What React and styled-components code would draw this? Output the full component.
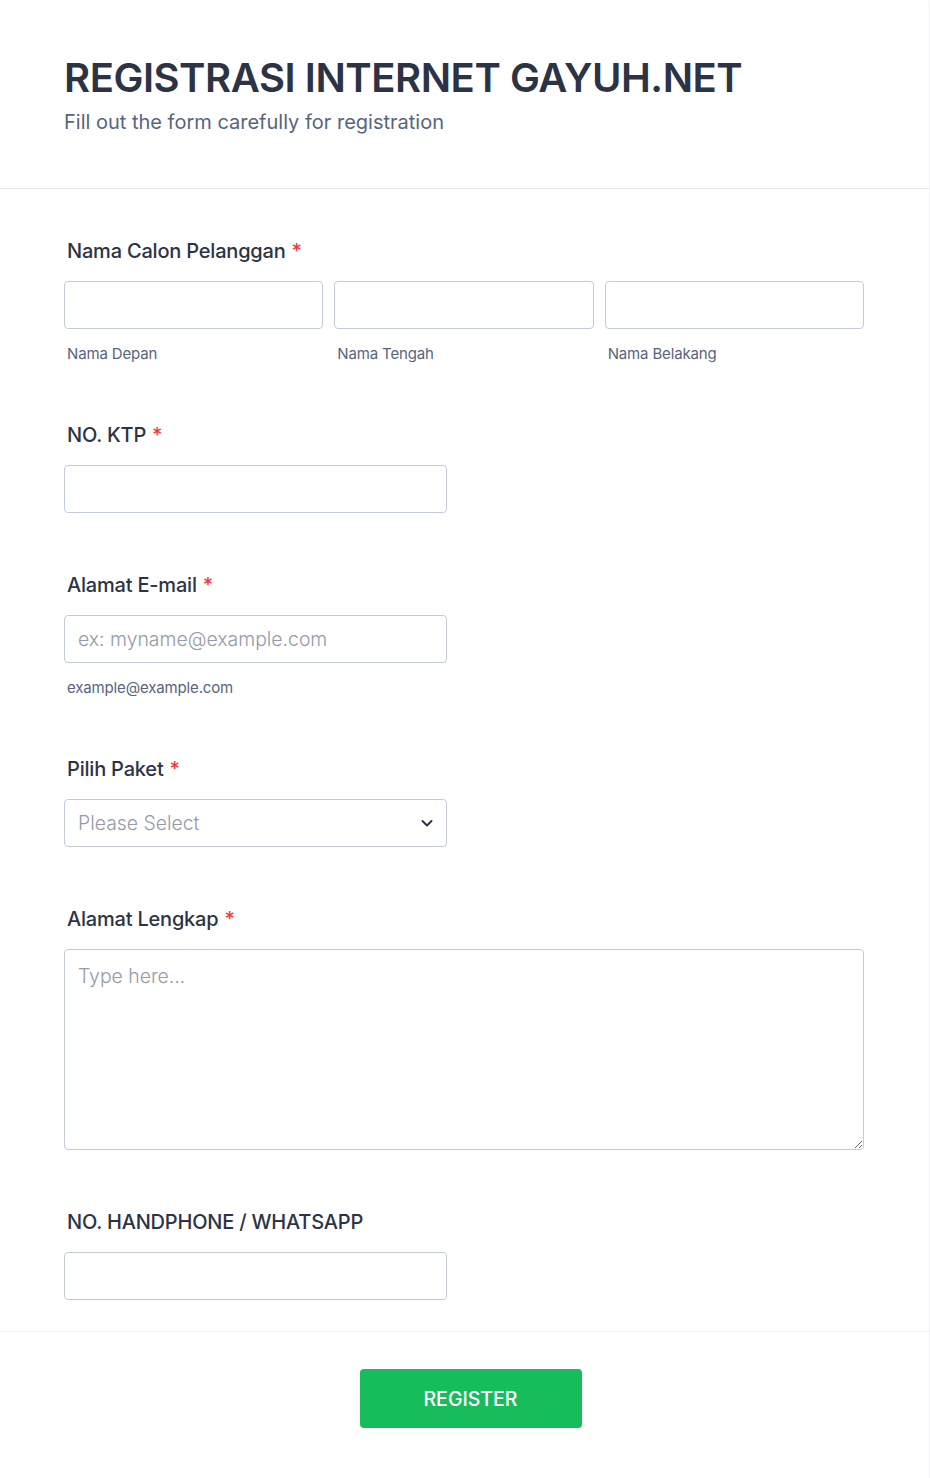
import React from 'react'
import styled, { createGlobalStyle } from 'styled-components'

const GlobalStyle = createGlobalStyle`
  html, body {
    margin: 0;
    padding: 0;
    background: #ffffff;
  }
  body {
    font-family: Inter, "Noto Sans", sans-serif;
    color: #2c3345;
  }
  * {
    box-sizing: border-box;
  }
`

const Card = styled.div`
  width: 930px;
  min-height: 1478px;
  background: #fff;
  border-right: 1px solid #f1f2f7;
  border-top-right-radius: 6px;
`

const Header = styled.header`
  padding: 53px 64px 52px;
  border-bottom: 1px solid #e3e5eb;
`

const Title = styled.h1`
  margin: 0;
  font-size: 40px;
  line-height: 50px;
  font-weight: 600;
  color: #2c3345;
  letter-spacing: -0.45px;
`

const Subtitle = styled.p`
  margin: 5px 0 0;
  font-size: 20px;
  line-height: 28px;
  color: #57647e;
`

const Form = styled.form`
  padding: 20px 65px 1px 64px;
`

const Field = styled.div`
  padding: 30px 0 30px;
`

const Label = styled.label`
  display: block;
  padding-left: 3px;
  margin-bottom: 18px;
  font-size: 20px;
  line-height: 24px;
  font-weight: 500;
  letter-spacing: -0.2px;
  color: #2c3345;
`

const Req = styled.span`
  color: #f23a3c;
  margin-left: 6px;
`

const Row = styled.div`
  display: grid;
  grid-template-columns: repeat(3, 1fr);
  gap: 11px;
`

const Input = styled.input`
  display: block;
  width: ${p => p.$width || '100%'};
  height: 48px;
  padding: 0 13px;
  border: 1px solid #c3cad8;
  border-radius: 4px;
  font-family: inherit;
  font-size: 19.4px;
  color: #2c3345;
  background: #fff;
  outline: none;

  &::placeholder {
    color: #949aa8;
    font-weight: 300;
  }
`

const Sub = styled.span`
  display: block;
  margin-top: 16px;
  padding-left: 3px;
  font-size: 15px;
  line-height: 18px;
  letter-spacing: -0.15px;
  color: #57647e;
`

const SelectBox = styled.div`
  width: 383px;
  height: 48px;
  display: flex;
  align-items: center;
  justify-content: space-between;
  padding: 0 12px 0 13px;
  border: 1px solid #c3cad8;
  border-radius: 4px;
  font-size: 19.4px;
  font-weight: 300;
  color: #949aa8;
`

const TextArea = styled.textarea`
  display: block;
  width: 100%;
  height: 201px;
  padding: 13px 13px;
  border: 1px solid #c3cad8;
  border-radius: 4px;
  font-family: inherit;
  font-size: 19.4px;
  line-height: 26px;
  color: #2c3345;
  outline: none;

  &::placeholder {
    color: #949aa8;
    font-weight: 300;
  }
`

const Footer = styled.div`
  border-top: 1px solid #eeeff5;
  padding: 37px 0 0 12px;
  display: flex;
  justify-content: center;
`

const Button = styled.button`
  width: 222px;
  height: 59px;
  border: none;
  border-radius: 4px;
  background: #18bd5b;
  color: #fff;
  font-family: inherit;
  font-size: 19.5px;
  font-weight: 500;
  cursor: pointer;
`

const Chevron = () => (
  <svg width="14" height="14" viewBox="0 0 14 14" fill="none">
    <path d="M2.5 5l4.5 4.5L11.5 5" stroke="#2c3345" strokeWidth="2" strokeLinecap="round" strokeLinejoin="round" />
  </svg>
)

const App = () => {
  return (
    <>
      <GlobalStyle />
      <Card>
        <Header>
          <Title>REGISTRASI INTERNET GAYUH.NET</Title>
          <Subtitle>Fill out the form carefully for registration</Subtitle>
        </Header>
        <Form onSubmit={e => e.preventDefault()}>
          <Field>
            <Label>Nama Calon Pelanggan<Req>*</Req></Label>
            <Row>
              <div>
                <Input />
                <Sub>Nama Depan</Sub>
              </div>
              <div>
                <Input />
                <Sub>Nama Tengah</Sub>
              </div>
              <div>
                <Input />
                <Sub>Nama Belakang</Sub>
              </div>
            </Row>
          </Field>
          <Field>
            <Label>NO. KTP<Req>*</Req></Label>
            <Input $width="383px" />
          </Field>
          <Field>
            <Label>Alamat E-mail<Req>*</Req></Label>
            <Input $width="383px" placeholder="ex: myname@example.com" />
            <Sub>example@example.com</Sub>
          </Field>
          <Field>
            <Label>Pilih Paket<Req>*</Req></Label>
            <SelectBox>
              Please Select
              <Chevron />
            </SelectBox>
          </Field>
          <Field>
            <Label>Alamat Lengkap<Req>*</Req></Label>
            <TextArea placeholder="Type here..." />
          </Field>
          <Field>
            <Label>NO. HANDPHONE / WHATSAPP</Label>
            <Input $width="383px" />
          </Field>
        </Form>
        <Footer>
          <Button type="button">REGISTER</Button>
        </Footer>
      </Card>
    </>
  )
}

export default App
